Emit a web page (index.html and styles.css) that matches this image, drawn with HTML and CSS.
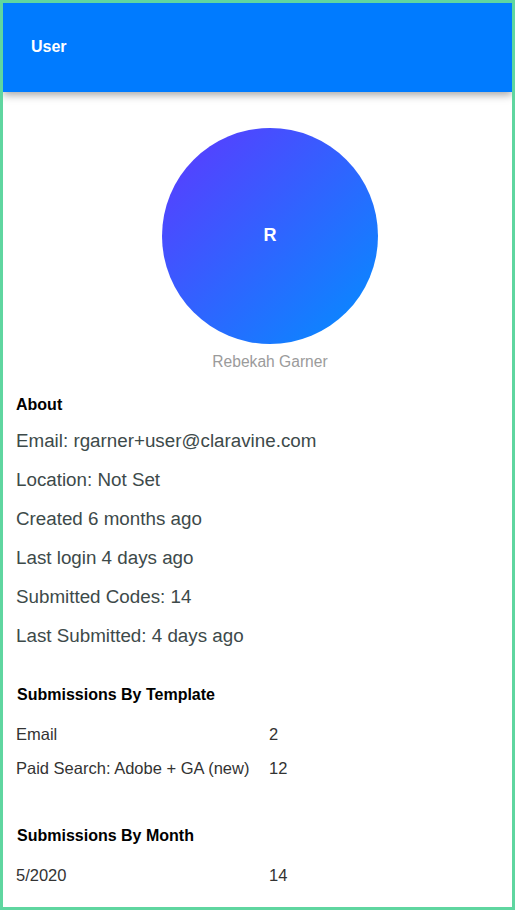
FILE: index.html
```html
<!DOCTYPE html>
<html lang="en">
<head>
<meta charset="utf-8">
<title>User</title>
<link rel="stylesheet" href="styles.css">
</head>
<body>
<div class="frame">
  <header class="topbar"><h1 class="topbar-title">User</h1></header>
  <main class="content">
    <section class="profile">
      <div class="avatar">R</div>
      <div class="profile-name">Rebekah Garner</div>
    </section>
    <section class="about">
      <h2 class="about-title">About</h2>
      <p class="fact">Email: rgarner+user@claravine.com</p>
      <p class="fact">Location: Not Set</p>
      <p class="fact">Created 6 months ago</p>
      <p class="fact">Last login 4 days ago</p>
      <p class="fact">Submitted Codes: 14</p>
      <p class="fact">Last Submitted: 4 days ago</p>
    </section>
    <section class="stats stats-template">
      <h2 class="stats-title">Submissions By Template</h2>
      <div class="stats-row"><span>Email</span><span>2</span></div>
      <div class="stats-row"><span>Paid Search: Adobe + GA (new)</span><span>12</span></div>
    </section>
    <section class="stats stats-month">
      <h2 class="stats-title">Submissions By Month</h2>
      <div class="stats-row"><span>5/2020</span><span>14</span></div>
    </section>
  </main>
</div>
</body>
</html>
```
FILE: styles.css
```css
* { box-sizing: border-box; }
html, body { margin: 0; padding: 0; }
body { font-family: "Liberation Sans", Arial, sans-serif; background: #fff; }
.frame {
  width: 515px;
  height: 910px;
  border: 3px solid #5fd6a0;
  overflow: hidden;
  background: #fff;
}
.topbar {
  height: 89px;
  background: #007bff;
  display: flex;
  align-items: center;
  padding: 0 0 2px 28px;
  box-shadow: 0 3px 8px rgba(0, 0, 0, 0.35);
}
.topbar-title { margin: 0; color: #fff; font-size: 16px; font-weight: 700; }
.content { padding: 36px 13px 0; }
.profile { display: flex; flex-direction: column; align-items: center; padding-left: 25px; }
.avatar {
  width: 216px;
  height: 216px;
  border-radius: 50%;
  background: linear-gradient(135deg, #5a3cff 5%, #0b86ff 90%);
  color: #fff;
  font-size: 18px;
  font-weight: 700;
  display: flex;
  align-items: center;
  justify-content: center;
  padding-bottom: 2px;
}
.profile-name { margin-top: 8px; color: #9b9b9b; font-size: 15.6px; line-height: 20px; }
.about { margin-top: 23px; }
.about-title { margin: 0 0 15px; color: #000; font-size: 16px; line-height: 20px; font-weight: 700; }
.fact { margin: 0 0 18px; color: #3d4a4a; font-size: 18.8px; line-height: 21px; }
.stats-title { margin: 0 0 21px; padding-left: 1px; color: #000; font-size: 16px; line-height: 18px; font-weight: 700; }
.stats-template { margin-top: 40px; }
.stats-month { margin-top: 50px; }
.stats-row {
  display: grid;
  grid-template-columns: 253px 1fr;
  color: #333;
  font-size: 16.5px;
  line-height: 18px;
  margin-bottom: 16px;
}
```
